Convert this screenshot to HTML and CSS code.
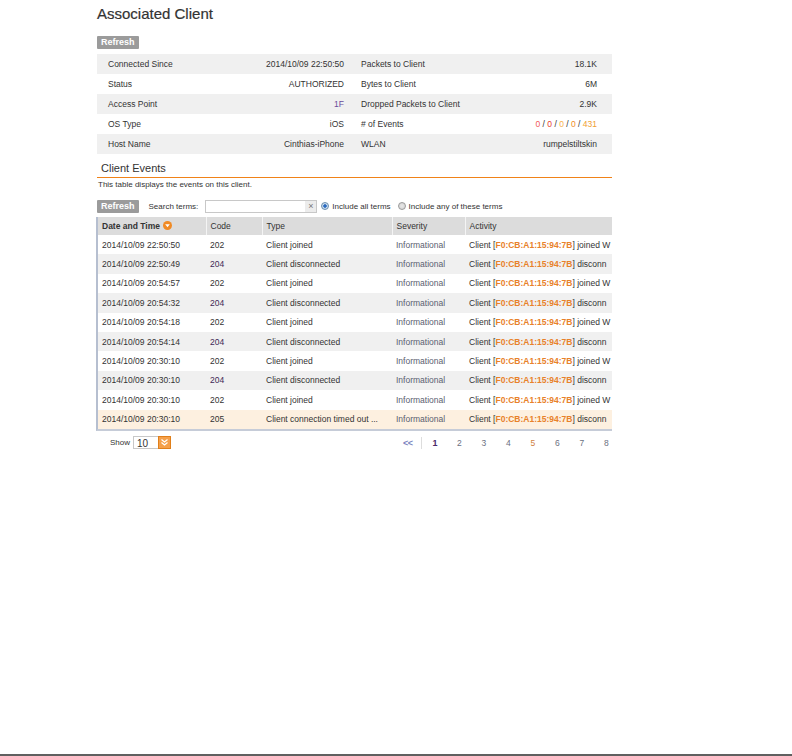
FILE: index.html
```html
<!DOCTYPE html>
<html>
<head>
<meta charset="utf-8">
<link rel="stylesheet" href="styles.css">
</head>
<body>
<div class="page">
  <h1 class="title">Associated Client</h1>
  <div class="btn">Refresh</div>
  <div class="info">
    <div class="info-row alt">
      <div class="cell l"><span>Connected Since</span><span>2014/10/09 22:50:50</span></div>
      <div class="cell r"><span>Packets to Client</span><span>18.1K</span></div>
    </div>
    <div class="info-row">
      <div class="cell l"><span>Status</span><span>AUTHORIZED</span></div>
      <div class="cell r"><span>Bytes to Client</span><span>6M</span></div>
    </div>
    <div class="info-row alt">
      <div class="cell l"><span>Access Point</span><span class="link">1F</span></div>
      <div class="cell r"><span>Dropped Packets to Client</span><span>2.9K</span></div>
    </div>
    <div class="info-row">
      <div class="cell l"><span>OS Type</span><span>iOS</span></div>
      <div class="cell r"><span># of Events</span><span class="events"><span class="e1">0</span> / <span class="e2">0</span> / <span class="e3">0</span> / <span class="e4">0</span> / <span class="e5">431</span></span></div>
    </div>
    <div class="info-row alt">
      <div class="cell l"><span>Host Name</span><span>Cinthias-iPhone</span></div>
      <div class="cell r"><span>WLAN</span><span>rumpelstiltskin</span></div>
    </div>
  </div>

  <div class="section-head">Client Events</div>
  <div class="section-rule"></div>
  <div class="desc">This table displays the events on this client.</div>

  <div class="toolbar">
    <div class="btn btn-inline">Refresh</div>
    <span class="search-label">Search terms:</span>
    <div class="search">
      <div class="search-input"></div>
      <div class="search-clear">×</div>
    </div>
    <span class="radio on"></span><span class="radio-label">Include all terms</span>
    <span class="radio"></span><span class="radio-label">Include any of these terms</span>
  </div>

  <div class="grid-wrap">
    <table class="events-table">
      <colgroup>
        <col class="c-date"><col class="c-code"><col class="c-type"><col class="c-sev"><col class="c-act">
      </colgroup>
      <thead>
        <tr>
          <th class="sorted">Date and Time <span class="sort-icon"><svg width="9" height="9" viewBox="0 0 9 9"><circle cx="4.5" cy="4.5" r="4.5" fill="#f08a24"/><path d="M2.2 3.2 L6.8 3.2 L4.5 6.2 Z" fill="#fff"/></svg></span></th>
          <th>Code</th>
          <th>Type</th>
          <th>Severity</th>
          <th>Activity</th>
        </tr>
      </thead>
      <tbody>
        <tr><td>2014/10/09 22:50:50</td><td>202</td><td>Client joined</td><td class="sev">Informational</td><td class="act">Client [<b>F0:CB:A1:15:94:7B</b>] joined W</td></tr>
        <tr class="alt"><td>2014/10/09 22:50:49</td><td class="purple">204</td><td>Client disconnected</td><td class="sev">Informational</td><td class="act">Client [<b>F0:CB:A1:15:94:7B</b>] disconn</td></tr>
        <tr><td>2014/10/09 20:54:57</td><td>202</td><td>Client joined</td><td class="sev">Informational</td><td class="act">Client [<b>F0:CB:A1:15:94:7B</b>] joined W</td></tr>
        <tr class="alt"><td>2014/10/09 20:54:32</td><td class="purple">204</td><td>Client disconnected</td><td class="sev">Informational</td><td class="act">Client [<b>F0:CB:A1:15:94:7B</b>] disconn</td></tr>
        <tr><td>2014/10/09 20:54:18</td><td>202</td><td>Client joined</td><td class="sev">Informational</td><td class="act">Client [<b>F0:CB:A1:15:94:7B</b>] joined W</td></tr>
        <tr class="alt"><td>2014/10/09 20:54:14</td><td class="purple">204</td><td>Client disconnected</td><td class="sev">Informational</td><td class="act">Client [<b>F0:CB:A1:15:94:7B</b>] disconn</td></tr>
        <tr><td>2014/10/09 20:30:10</td><td>202</td><td>Client joined</td><td class="sev">Informational</td><td class="act">Client [<b>F0:CB:A1:15:94:7B</b>] joined W</td></tr>
        <tr class="alt"><td>2014/10/09 20:30:10</td><td class="purple">204</td><td>Client disconnected</td><td class="sev">Informational</td><td class="act">Client [<b>F0:CB:A1:15:94:7B</b>] disconn</td></tr>
        <tr><td>2014/10/09 20:30:10</td><td>202</td><td>Client joined</td><td class="sev">Informational</td><td class="act">Client [<b>F0:CB:A1:15:94:7B</b>] joined W</td></tr>
        <tr class="hl"><td>2014/10/09 20:30:10</td><td>205</td><td class="ell">Client connection timed out ...</td><td class="sev">Informational</td><td class="act">Client [<b>F0:CB:A1:15:94:7B</b>] disconn</td></tr>
      </tbody>
    </table>
  </div>

  <div class="footer-row">
    <div class="show">
      <span class="show-label">Show</span>
      <div class="select">
        <span class="select-val">10</span>
        <span class="select-btn"><svg width="13" height="13" viewBox="0 0 13 13"><rect x="0.5" y="0.5" width="12" height="12" fill="#f5a04a" stroke="#e07f1a"/><path d="M3.5 3.5 L6.5 6 L9.5 3.5 M3.5 6.5 L6.5 9 L9.5 6.5" stroke="#fff" stroke-width="1.2" fill="none"/></svg></span>
      </div>
    </div>
    <div class="pager">
      <span class="first">&lt;&lt;</span>
      <span class="sep"></span>
      <span class="pg cur">1</span>
      <span class="pg">2</span>
      <span class="pg">3</span>
      <span class="pg">4</span>
      <span class="pg or">5</span>
      <span class="pg">6</span>
      <span class="pg">7</span>
      <span class="pg">8</span>
    </div>
  </div>
</div>
<div class="spacer"></div>
<div class="bottom-line"></div>
</body>
</html>
```

FILE: styles.css
```css
html, body {
  height: 100%;
}
body {
  margin: 0;
  display: flex;
  flex-direction: column;
  font-family: "Liberation Sans", Arial, sans-serif;
  color: #333;
  background: #fff;
}
.page {
  margin-left: 97px;
  width: 515px;
  padding-top: 5px;
}
.title {
  margin: 0;
  font-size: 15px;
  font-weight: normal;
  line-height: 18px;
  color: #333;
  -webkit-text-stroke: 0.2px #333;
}
.btn {
  margin-top: 13px;
  display: inline-block;
  background: #9b9b9b;
  color: #fff;
  font-size: 9px;
  font-weight: bold;
  line-height: 13px;
  height: 13px;
  padding: 0 4px;
  border-radius: 1px;
}
.info {
  margin-top: 5px;
  font-size: 8.5px;
}
.info-row {
  display: grid;
  grid-template-columns: 257px 258px;
  height: 20px;
  background: #fff;
}
.info-row.alt {
  background: #f0f0f0;
}
.cell {
  display: flex;
  justify-content: space-between;
  align-items: center;
}
.cell.l {
  padding: 0 10px 0 11px;
}
.cell.r {
  padding: 0 15px 0 7px;
}
.link {
  color: #6a4a9a;
}
.e1 { color: #f25a5a; }
.e2 { color: #e8402c; }
.e3 { color: #f7b24a; }
.e4 { color: #f08c1e; }
.e5 { color: #f0a030; }
.section-head {
  margin-top: 7px;
  padding: 0 4px 2px;
  font-size: 11px;
  line-height: 14px;
  color: #333;
}
.section-rule {
  height: 1px;
  background: #f08218;
}
.desc {
  font-size: 8px;
  line-height: 10px;
  margin-top: 2px;
  padding-left: 1px;
}
.toolbar {
  margin-top: 9px;
  display: flex;
  align-items: center;
  height: 14px;
  font-size: 8px;
}
.btn-inline {
  margin-top: 0;
}
.search-label {
  margin-left: 10px;
}
.search {
  margin-left: 7px;
  display: flex;
  height: 13px;
  width: 112px;
  border: 1px solid #c8c8c8;
  box-sizing: border-box;
}
.search-input {
  flex: 1;
  background: #fff;
}
.search-clear {
  width: 11px;
  background: #ececec;
  color: #777;
  font-size: 9px;
  line-height: 11px;
  text-align: center;
}
.radio {
  width: 8px;
  height: 8px;
  border-radius: 50%;
  border: 1px solid #9a9a9a;
  background: radial-gradient(circle, #e8e8e8 0, #d0d0d0 100%);
  box-sizing: border-box;
  margin-left: 4px;
  margin-right: 3px;
}
.radio.on {
  border-color: #6b8fb0;
  background: radial-gradient(circle, #2a6ac0 0, #2a6ac0 35%, #cfe0f0 45%, #b8cde0 100%);
}
.radio-label {
  margin-right: 3px;
}
.grid-wrap {
  margin-top: 4px;
  margin-left: -1px;
  width: 516px;
  overflow: hidden;
  border-left: 2px solid #b6bfd0;
  border-bottom: 2px solid #c6ccd8;
  box-sizing: border-box;
}
.events-table {
  border-collapse: collapse;
  table-layout: fixed;
  width: 514px;
  font-size: 8.5px;
}
.c-date { width: 108px; }
.c-code { width: 56px; }
.c-type { width: 130px; }
.c-sev { width: 73px; }
.c-act { width: 147px; }
.events-table th {
  background: #dcdcdc;
  font-weight: normal;
  text-align: left;
  height: 18px;
  padding: 0 4px;
  border-left: 1px solid #f4f4f4;
  white-space: nowrap;
}
.events-table th:first-child {
  border-left: none;
}
.events-table th.sorted {
  font-weight: bold;
}
.sort-icon {
  display: inline-block;
  vertical-align: -1px;
  margin-left: 1px;
}
.events-table td {
  height: 19.4px;
  padding: 0 4px;
  white-space: nowrap;
  overflow: hidden;
}
.events-table td.act {
  padding-right: 0;
}
.events-table tr.alt td {
  background: #f0f0f0;
}
.events-table tr.hl td {
  background: #fdf0e0;
}
.sev {
  color: #5a6070;
}
.act b {
  color: #e8812a;
  font-weight: bold;
}
.purple {
  color: #3f2a55;
}
.footer-row {
  display: flex;
  align-items: center;
  height: 20px;
  margin-top: 2px;
}
.show {
  display: flex;
  align-items: center;
  padding-left: 13px;
  font-size: 8px;
}
.show-label {
  margin-right: 3px;
}
.select {
  display: flex;
  align-items: center;
}
.select-val {
  width: 25px;
  height: 13px;
  line-height: 13px;
  border: 1px solid #c8c8c8;
  border-right: none;
  box-sizing: border-box;
  font-size: 10px;
  padding-left: 3px;
}
.select-btn {
  display: flex;
}
.pager {
  margin-left: auto;
  display: flex;
  align-items: center;
  font-size: 8.5px;
  color: #667;
}
.first {
  color: #7a84c0;
  font-size: 9px;
  font-weight: bold;
  letter-spacing: -0.5px;
}
.sep {
  width: 1px;
  height: 12px;
  background: #ddd;
  margin: 0 11px 0 8px;
}
.pg {
  width: 24.5px;
  color: #6b7080;
}
.pg.cur {
  color: #4a2a6a;
  font-weight: bold;
  font-size: 9px;
}
.pg.or {
  color: #d08040;
}
.pg:last-child {
  width: 8px;
}
.spacer {
  flex: 1;
}
.bottom-line {
  height: 2px;
  background: #606060;
}
```
